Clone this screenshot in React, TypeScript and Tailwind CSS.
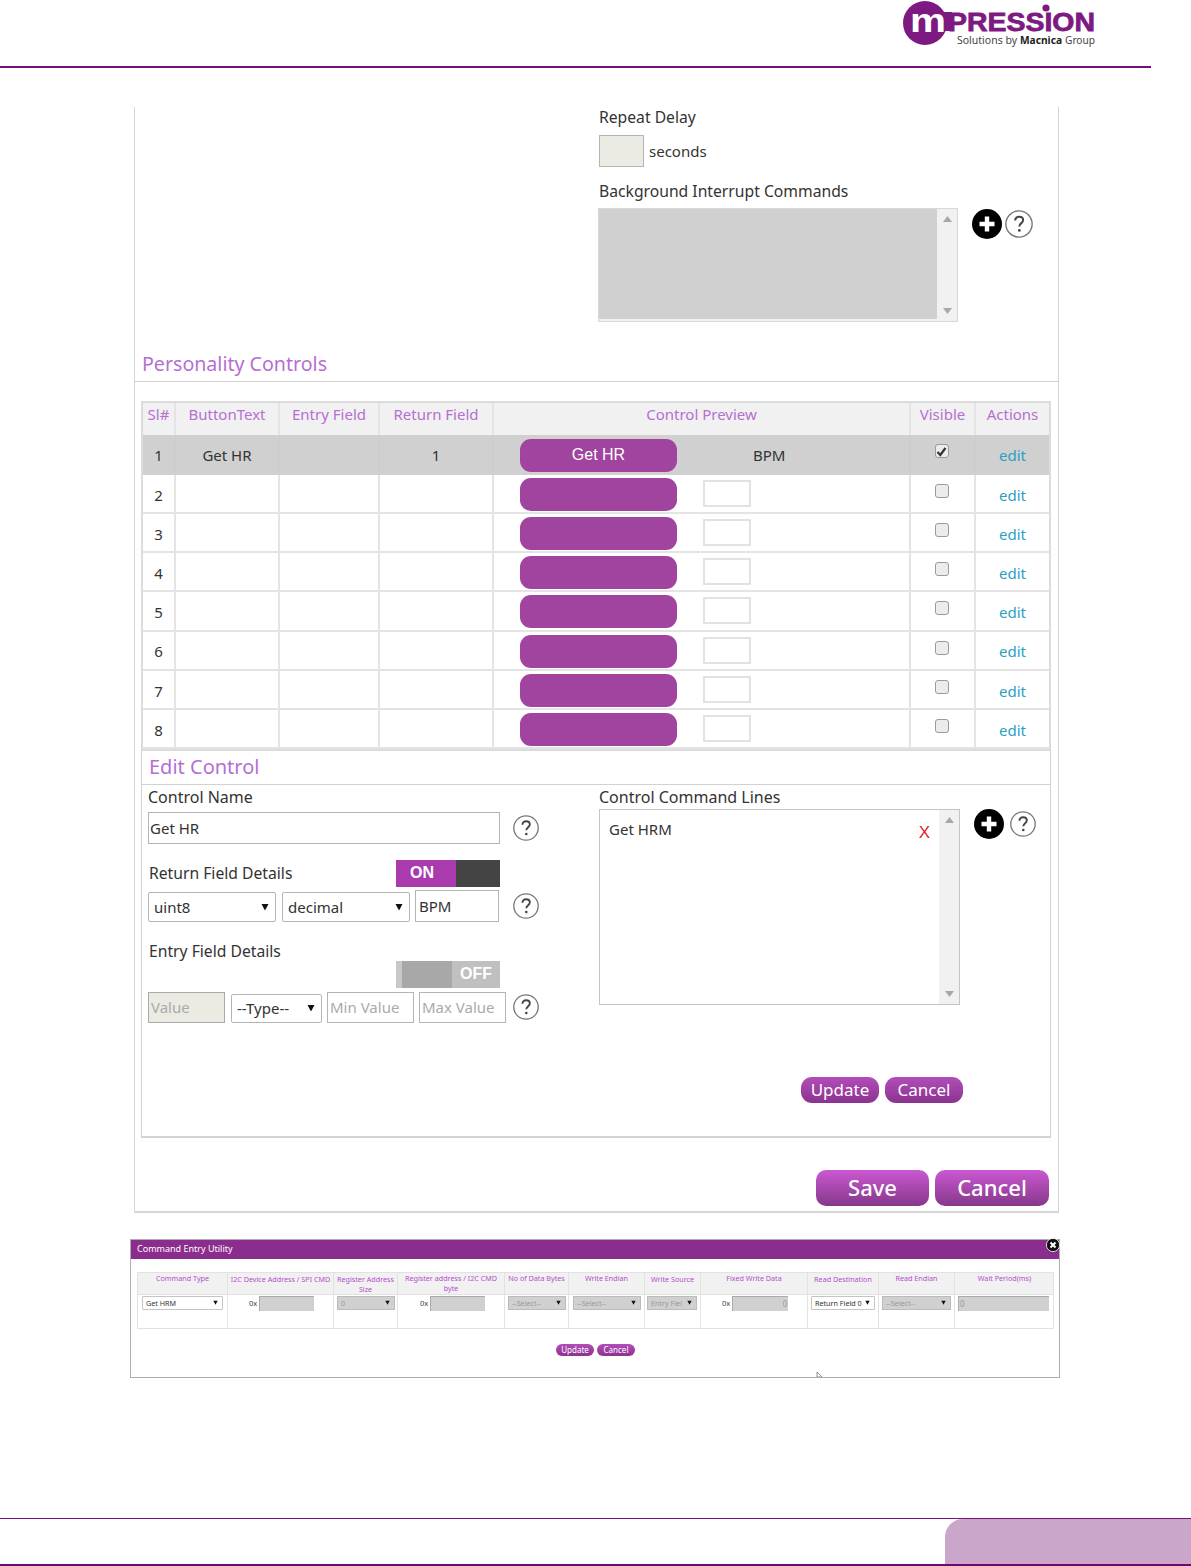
const font = '"Noto Sans", "Open Sans", sans-serif';

function Logo() {
  return (
    <svg width="196" height="48" viewBox="0 0 196 48" aria-label="mPression logo">
      <circle cx="23" cy="23" r="22" fill="#7d1a82" />
      <rect x="36" y="12" width="14" height="19" fill="#7d1a82" />
      <text x="8" y="32" fill="#fff" fontFamily="Liberation Sans" fontWeight="700" fontSize="34" textLength="36" lengthAdjust="spacingAndGlyphs">m</text>
      <text x="46" y="31" fill="#7d1a82" stroke="#7d1a82" strokeWidth="0.8" fontFamily="Liberation Sans" fontWeight="700" fontSize="26" textLength="147" lengthAdjust="spacingAndGlyphs">PRESSION</text>
      <circle cx="144" cy="8" r="3.6" fill="#7d1a82" />
      <text x="55" y="44" fill="#444" fontFamily="Noto Sans" fontSize="10.5" textLength="60" lengthAdjust="spacingAndGlyphs">Solutions by</text>
      <text x="118" y="44" fill="#222" fontFamily="Noto Sans" fontWeight="700" fontSize="10.5" textLength="42" lengthAdjust="spacingAndGlyphs">Macnica</text>
      <text x="163" y="44" fill="#444" fontFamily="Noto Sans" fontSize="10.5" textLength="30" lengthAdjust="spacingAndGlyphs">Group</text>
    </svg>
  );
}

function Plus() {
  return (
    <svg width="30" height="30" viewBox="0 0 30 30" className="shrink-0">
      <circle cx="15" cy="15" r="15" fill="#000" />
      <path d="M15 7.5v15M7.5 15h15" stroke="#fff" strokeWidth="4.4" />
    </svg>
  );
}

function Help({ size = 26 }: { size?: number }) {
  return (
    <svg width={size} height={size} viewBox="0 0 26 26" className="shrink-0">
      <circle cx="13" cy="13" r="12.2" fill="#fff" stroke="#777" strokeWidth="1.3" />
      <path d="M9.4 9.8c0-2.2 1.6-3.5 3.7-3.5s3.7 1.3 3.7 3.2c0 2.6-3.5 2.8-3.5 5.8" fill="none" stroke="#444" strokeWidth="1.9" />
      <circle cx="13.3" cy="19" r="1.3" fill="#444" />
    </svg>
  );
}

function Arrow({ className = '' }: { className?: string }) {
  return (
    <svg width="8" height="8" viewBox="0 0 8 8" className={'shrink-0 ' + className}>
      <path d="M0.5 1h7L4 7.5z" fill="#111" />
    </svg>
  );
}

function Select({ label, className }: { label: string; className: string }) {
  return (
    <div className={'flex items-center justify-between border border-[#b5b5b5] rounded-[2px] bg-white pl-[5px] pr-[6px] text-[15px] text-[#333] ' + className}>
      <span>{label}</span>
      <Arrow />
    </div>
  );
}

function ScrollTrack({ bg = 'bg-[#f1f1f1]' }: { bg?: string }) {
  return (
    <div className={'w-5 flex flex-col items-center justify-between py-[7px] ' + bg}>
      <svg width="9" height="6" viewBox="0 0 9 6"><path d="M0 6h9L4.5 0z" fill="#a8a8a8" /></svg>
      <svg width="9" height="6" viewBox="0 0 9 6"><path d="M0 0h9L4.5 6z" fill="#a8a8a8" /></svg>
    </div>
  );
}

const tableCols = 'grid grid-cols-[33px_104px_100px_114px_417px_65px_73px]';
const cell = 'flex items-center justify-center border-r-2 last:border-r-0';

function HeaderRow() {
  const labels = ['Sl#', 'ButtonText', 'Entry Field', 'Return Field', 'Control Preview', 'Visible', 'Actions'];
  return (
    <div className={tableCols + ' h-8 bg-[#f1f1f1] text-[15px] text-[#b56fd2]'}>
      {labels.map((l) => (
        <div key={l} className={cell + ' border-[#e4e4e4] pb-[12px]'}>{l}</div>
      ))}
    </div>
  );
}

function Row({ n, active }: { n: number; active?: boolean }) {
  const line = active ? ' border-[#cdcdcd]' : ' border-[#e4e4e4]';
  return (
    <div className={tableCols + ' border-b-2 text-[15px] text-[#333] ' + (active ? 'h-[40px] bg-[#d0d0d0] border-[#d0d0d0]' : 'h-[39.15px] bg-white border-[#e4e4e4]')}>
      <div className={cell + ' pt-[3px]' + line}>{n}</div>
      <div className={cell + ' pt-[3px]' + line}>{active ? 'Get HR' : ''}</div>
      <div className={cell + line}></div>
      <div className={cell + ' pt-[3px]' + line}>{active ? '1' : ''}</div>
      <div className={'flex items-start pl-[26px] border-r-2' + line + (active ? ' pt-[4px]' : ' pt-[3px]')}>
        <div className="w-[157px] h-[33px] rounded-[11px] bg-[#a044a0] flex items-center justify-center text-white text-[16px] font-['Liberation_Sans'] pb-[2px]">
          {active ? 'Get HR' : ''}
        </div>
        {active ? (
          <div className="ml-[26px] w-[47px] h-[33px] flex items-center justify-start pl-[50px] whitespace-nowrap">BPM</div>
        ) : (
          <div className="ml-[26px] mt-[2px] w-[48px] h-[27px] bg-white border-2 border-[#e2e2e2]"></div>
        )}
      </div>
      <div className={cell + ' items-start pt-[9px] pr-[2px]' + line}>
        <div className="w-[14px] h-[14px] rounded-[3px] border border-[#9a9a9a] bg-[#ececec] flex items-center justify-center">
          {active && (
            <svg width="11" height="11" viewBox="0 0 11 11"><path d="M1.5 6l2.8 3L9.5 2" fill="none" stroke="#333" strokeWidth="2.2" /></svg>
          )}
        </div>
      </div>
      <div className={cell + ' pt-[3px] text-[#2a9fc4]' + line}>edit</div>
    </div>
  );
}

const input = 'border border-[#b5b5b5] bg-white';

function GlossBtn({ label, className }: { label: string; className: string }) {
  return (
    <div className={'flex items-center justify-center text-white bg-gradient-to-b ' + className}>{label}</div>
  );
}

const dCols = 'grid grid-cols-[90px_106px_64px_107px_64px_76px_56px_107px_71px_76px_99px]';

function DHead({ children, top = 'pt-0' }: { children: string; top?: string }) {
  return <div className={'border-r border-[#e2e2e2] last:border-r-0 text-center text-[7.2px] leading-[10px] text-[#b44fcb] ' + top}>{children}</div>;
}

function DCell({ children, className = '' }: { children?: React.ReactNode; className?: string }) {
  return <div className={'border-r border-[#e2e2e2] last:border-r-0 pt-[1px] flex items-start ' + className}>{children}</div>;
}

function DSelect({ label, w, on }: { label: string; w: string; on?: boolean }) {
  return (
    <div className={'h-[14px] flex items-center justify-between pl-[3px] pr-[4px] text-[7.2px] overflow-hidden whitespace-nowrap ' + w + (on ? ' bg-white border border-[#c4c4c4] rounded-[1px] text-[#333]' : ' bg-[#d0d0d0] border border-[#bbb] text-[#999]')}>
      <span className="overflow-hidden">{label}</span>
      <svg width="5" height="5" viewBox="0 0 8 8" className="shrink-0 ml-[1px]"><path d="M0.5 1h7L4 7.5z" fill="#111" /></svg>
    </div>
  );
}

function DInput({ w, text, right }: { w: string; text?: string; right?: boolean }) {
  return (
    <div className={'h-[15px] bg-[#d0d0d0] border-l border-t border-[#aaa] text-[8px] text-[#999] px-[1px] flex items-center ' + w + (right ? ' justify-end' : '')}>{text}</div>
  );
}

function Hex() {
  return <span className="text-[7.5px] text-[#444] leading-[15px] mr-[2px]">0x</span>;
}

export default function App() {
  return (
    <div className="w-[1191px] h-[1566px] bg-white overflow-hidden flex flex-col" style={{ fontFamily: font }}>
      {/* page header */}
      <header className="w-[1151px] h-[68px] border-b-2 border-[#73107a] flex justify-end pr-[53px] shrink-0">
        <Logo />
      </header>

      {/* main panel */}
      <div className="mt-[39px] ml-[134px] w-[925px] border-x border-b-2 border-[#d6d6d6] shrink-0">
        <div className="pl-[464px]">
          <div className="h-[22px] leading-[20px] text-[15.7px] text-[#333]">Repeat Delay</div>
          <div className="mt-[6px] flex items-center gap-[5px]">
            <div className="w-[45px] h-[32px] bg-[#ebebe4] border border-[#b5b5b5]"></div>
            <span className="text-[15px] text-[#333]">seconds</span>
          </div>
          <div className="mt-[14px] h-[22px] leading-[20px] text-[15.7px] text-[#333]">Background Interrupt Commands</div>
          <div className="mt-[5px] -ml-[1px] flex items-start">
            <div className="w-[360px] h-[114px] border border-[#d8d8d8] flex">
              <div className="flex-1 bg-[#d0d0d0] border-b-2 border-[#f1f1f1]"></div>
              <ScrollTrack />
            </div>
            <div className="ml-[14px] mt-[1px] flex items-center gap-[3px]">
              <Plus />
              <Help size={28} />
            </div>
          </div>
        </div>

        <div className="mt-[28px] h-[32px] border-b border-[#cfcfcf] pl-[7px] text-[19.6px] leading-[28px] text-[#b56fd2]">Personality Controls</div>

        <div className="mt-[19px] ml-[6px] w-[910px]">
          <div className="border-x-2 border-t-2 border-[#dcdcdc]">
            <HeaderRow />
            {[1, 2, 3, 4, 5, 6, 7, 8].map((n) => (
              <Row key={n} n={n} active={n === 1} />
            ))}
          </div>
          <div className="border-x border-b-2 border-[#d2d2d2] border-t-2 border-t-[#dcdcdc]">
            <div className="h-[34px] border-b border-[#d2d2d2] pl-[7px] text-[20px] leading-[31px] text-[#b56fd2]">Edit Control</div>
            <div className="h-[351px] flex text-[15px] text-[#333]">
              <div className="w-[457px] pl-[6px]">
                <div className="h-[24px] leading-[24px] text-[16px]">Control Name</div>
                <div className="mt-[3px] flex items-center gap-[13px]">
                  <div className={input + ' w-[352px] h-[32px] pl-[1px] flex items-center'}>Get HR</div>
                  <Help />
                </div>
                <div className="mt-[16px] w-[352px] h-[27px] flex items-center justify-between">
                  <span className="pl-[1px] text-[15.7px]">Return Field Details</span>
                  <div className="w-[104px] h-[27px] flex font-['Liberation_Sans'] font-bold text-[16px] text-white">
                    <div className="w-[60px] bg-[#a93bae] flex items-center justify-center pr-[8px]">ON</div>
                    <div className="flex-1 bg-[#444]"></div>
                  </div>
                </div>
                <div className="mt-[3px] flex items-end">
                  <Select label="uint8" className="w-[128px] h-[30px]" />
                  <Select label="decimal" className="ml-[6px] w-[128px] h-[30px]" />
                  <div className={input + ' ml-[5px] w-[84px] h-[32px] pl-[3px] flex items-center'}>BPM</div>
                  <div className="ml-[14px] mb-[3px]"><Help /></div>
                </div>
                <div className="mt-[18px] h-[22px] leading-[22px] pl-[1px] text-[15.7px]">Entry Field Details</div>
                <div className="ml-[248px] -mt-[1px] w-[104px] h-[27px] flex font-['Liberation_Sans'] font-bold text-[16px] text-white">
                  <div className="w-[6px] bg-[#c8c8c8]"></div>
                  <div className="w-[50px] bg-[#a8a8a8]"></div>
                  <div className="flex-1 bg-[#c0c0c0] flex items-center justify-center">OFF</div>
                </div>
                <div className="mt-[4px] flex items-end">
                  <div className="w-[77px] h-[31px] bg-[#ebebe4] border border-[#aaa] pl-[2px] flex items-center text-[#aaa]">Value</div>
                  <Select label="--Type--" className="ml-[6px] w-[91px] h-[29px]" />
                  <div className={input + ' ml-[5px] w-[87px] h-[31px] pl-[2px] flex items-center text-[#aaa]'}>Min Value</div>
                  <div className={input + ' ml-[5px] w-[87px] h-[31px] pl-[2px] flex items-center text-[#aaa]'}>Max Value</div>
                  <div className="ml-[7px] mb-[3px]"><Help /></div>
                </div>
              </div>

              <div className="flex-1">
                <div className="h-[24px] leading-[24px] text-[16px]">Control Command Lines</div>
                <div className="flex items-start">
                  <div className="w-[361px] h-[196px] border border-[#c4c4c4] flex">
                    <div className="flex-1 flex items-start justify-between pl-[9px] pr-[9px] pt-[8px]">
                      <span>Get HRM</span>
                      <span className="text-[17px] leading-[26px] mt-[2px] text-[#e0262c] font-['Liberation_Sans']">X</span>
                    </div>
                    <ScrollTrack />
                  </div>
                  <div className="ml-[14px] flex items-center gap-[6px]">
                    <Plus />
                    <Help />
                  </div>
                </div>
                <div className="mt-[72px] ml-[202px] flex gap-[6px] text-[17px]">
                  <GlossBtn label="Update" className="w-[78px] h-[26px] rounded-[11px] from-[#b24db9] to-[#8b3390]" />
                  <GlossBtn label="Cancel" className="w-[78px] h-[26px] rounded-[11px] from-[#b24db9] to-[#8b3390]" />
                </div>
              </div>
            </div>
          </div>
        </div>

        <div className="mt-[32px] mb-[5px] ml-[681px] flex gap-[6px] text-[22px] font-medium">
          <GlossBtn label="Save" className="w-[113px] h-[36px] rounded-[10px] from-[#cb58d2] to-[#86388a]" />
          <GlossBtn label="Cancel" className="w-[114px] h-[36px] rounded-[10px] from-[#cb58d2] to-[#86388a]" />
        </div>
      </div>

      {/* dialog */}
      <div className="relative mt-[26px] ml-[130px] w-[930px] h-[139px] border border-[#adadad] shrink-0">
        <div className="h-[19px] bg-[#8b2d8e] pl-[6px] text-[9px] leading-[17px] text-white">Command Entry Utility</div>
        <div className="mt-[13px] ml-[6px] w-[917px] h-[57px] border border-[#e2e2e2]">
          <div className={dCols + ' h-[22px] bg-[#f1f1f1] border-b border-[#e2e2e2]'}>
            <DHead>Command Type</DHead>
            <DHead top="pt-[1px] whitespace-nowrap">I2C Device Address / SPI CMD</DHead>
            <DHead top="pt-[1px]">Register Address Size</DHead>
            <DHead>Register address / I2C CMD byte</DHead>
            <DHead>No of Data Bytes</DHead>
            <DHead>Write Endian</DHead>
            <DHead top="pt-[1px]">Write Source</DHead>
            <DHead>Fixed Write Data</DHead>
            <DHead top="pt-[1px]">Read Destination</DHead>
            <DHead>Read Endian</DHead>
            <DHead>Wait Period(ms)</DHead>
          </div>
          <div className={dCols + ' h-[33px]'}>
            <DCell className="pl-[4px]"><DSelect on label="Get HRM" w="w-[81px]" /></DCell>
            <DCell className="pl-[21px]"><Hex /><DInput w="w-[55px]" /></DCell>
            <DCell className="pl-[3px]"><DSelect label="0" w="w-[58px]" /></DCell>
            <DCell className="pl-[22px]"><Hex /><DInput w="w-[55px]" /></DCell>
            <DCell className="pl-[3px]"><DSelect label="--Select--" w="w-[58px]" /></DCell>
            <DCell className="pl-[4px]"><DSelect label="--Select--" w="w-[68px]" /></DCell>
            <DCell className="pl-[2px]"><DSelect label="Entry Fiel" w="w-[50px]" /></DCell>
            <DCell className="pl-[21px]"><Hex /><DInput w="w-[56px]" text="0" right /></DCell>
            <DCell className="pl-[3px]"><DSelect on label="Return Field 0" w="w-[64px]" /></DCell>
            <DCell className="pl-[3px]"><DSelect label="--Select--" w="w-[69px]" /></DCell>
            <DCell className="pl-[3px]"><DInput w="w-[91px]" text="0" /></DCell>
          </div>
        </div>
        <div className="mt-[15px] pl-[425px] flex gap-[3px] text-[8px] leading-none">
          <GlossBtn label="Update" className="w-[38px] h-[12px] rounded-[6px] from-[#b24db9] to-[#8b3390]" />
          <GlossBtn label="Cancel" className="w-[38px] h-[12px] rounded-[6px] from-[#b24db9] to-[#8b3390]" />
        </div>
        <svg width="14" height="14" viewBox="0 0 14 14" className="absolute -top-[2px] -right-[1px]">
          <circle cx="7" cy="7" r="6.6" fill="#111" stroke="#fff" strokeWidth="0.8" />
          <path d="M4.5 4.5l5 5M9.5 4.5l-5 5" stroke="#fff" strokeWidth="2" />
        </svg>
        <svg width="7" height="5" viewBox="0 0 7 5" className="absolute left-[685px] bottom-0">
          <path d="M1 0l5 5H1z" fill="#fff" stroke="#666" strokeWidth="0.7" />
        </svg>
      </div>

      {/* page footer */}
      <footer className="mt-[140px] h-[48px] border-t border-[#7b0d7f] border-b-2 border-b-[#6a0a6e] flex justify-end shrink-0">
        <div className="w-[246px] h-full rounded-tl-[18px] bg-[#caa6ca]"></div>
      </footer>
    </div>
  );
}
